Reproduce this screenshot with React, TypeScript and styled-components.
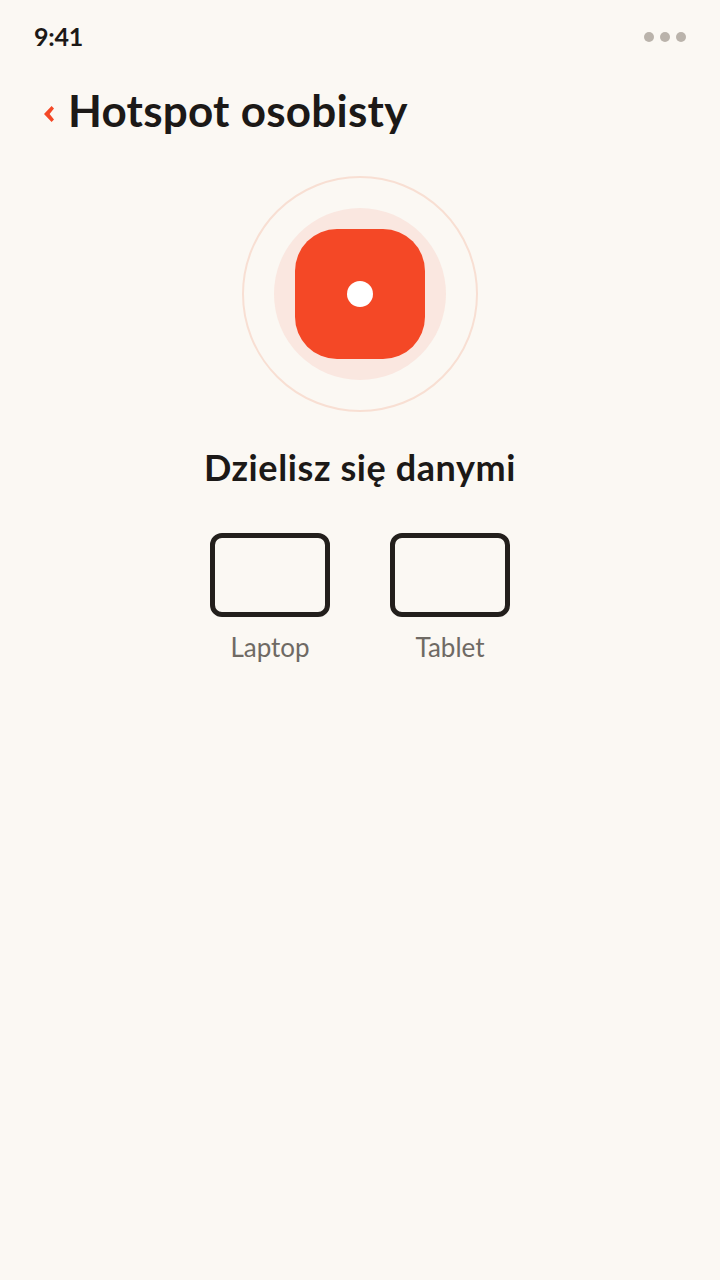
import React from 'react';
import styled, { createGlobalStyle } from 'styled-components';

const GlobalStyle = createGlobalStyle`
  html, body {
    margin: 0;
    padding: 0;
    background: #fbf8f3;
  }
  body {
    font-family: 'Lato', 'Liberation Sans', sans-serif;
  }
`;

const Screen = styled.div`
  width: 720px;
  height: 1280px;
  background: #fbf8f3;
  display: flex;
  flex-direction: column;
  align-items: center;
  overflow: hidden;
`;

const StatusBar = styled.div`
  width: 100%;
  box-sizing: border-box;
  height: 74px;
  padding: 0 34px;
  display: flex;
  align-items: center;
  justify-content: space-between;
`;

const Time = styled.span`
  margin-top: -2px;
  font-size: 25px;
  font-weight: 700;
  letter-spacing: -0.2px;
  color: #1c1917;
`;

const Dots = styled.div`
  display: flex;
  gap: 6px;
`;

const Dot = styled.span`
  width: 10px;
  height: 10px;
  border-radius: 50%;
  background: #bab3ab;
`;

const Header = styled.div`
  width: 100%;
  box-sizing: border-box;
  height: 74px;
  padding-left: 44px;
  display: flex;
  align-items: center;
  gap: 14px;
`;

const BackArrow = styled.svg`
  flex: none;
  margin-top: 6px;
`;

const Title = styled.h1`
  margin: -3px 0 0;
  font-size: 44px;
  font-weight: 700;
  letter-spacing: 0.25px;
  color: #1c1917;
`;

const Rings = styled.div`
  margin-top: 28px;
  width: 236px;
  height: 236px;
  box-sizing: border-box;
  border: 2px solid #f8dfd3;
  border-radius: 50%;
  display: flex;
  align-items: center;
  justify-content: center;
`;

const Halo = styled.div`
  width: 172px;
  height: 172px;
  border-radius: 50%;
  background: #fae7e0;
  display: flex;
  align-items: center;
  justify-content: center;
`;

const Tile = styled.div`
  width: 130px;
  height: 130px;
  border-radius: 42px;
  background: #f44826;
  display: flex;
  align-items: center;
  justify-content: center;
`;

const Pupil = styled.div`
  width: 26px;
  height: 26px;
  border-radius: 50%;
  background: #fff;
`;

const Status = styled.h2`
  margin: 32px 0 0;
  font-size: 36px;
  line-height: 46px;
  font-weight: 700;
  letter-spacing: 0.6px;
  color: #1c1917;
`;

const Devices = styled.div`
  margin-top: 43px;
  display: flex;
  gap: 60px;
`;

const Device = styled.div`
  width: 120px;
  display: flex;
  flex-direction: column;
  align-items: center;
`;

const DeviceFrame = styled.div`
  width: 120px;
  height: 84px;
  box-sizing: border-box;
  border: 5px solid #231f1c;
  border-radius: 12px;
`;

const DeviceName = styled.span`
  margin-top: 15px;
  font-size: 26px;
  line-height: 30px;
  color: #6f6a64;
`;

const BackIcon = () => (
  <BackArrow width="10" height="16" viewBox="0 0 10 16">
    <path d="M7.6 0L10 2.4 5.6 8 10 13.6 7.6 16 0 8Z" fill="#f44826" />
  </BackArrow>
);

const App: React.FC = () => {
  const devices = ['Laptop', 'Tablet'];

  return (
    <Screen>
      <GlobalStyle />
      <StatusBar>
        <Time>9:41</Time>
        <Dots>
          <Dot />
          <Dot />
          <Dot />
        </Dots>
      </StatusBar>
      <Header>
        <BackIcon />
        <Title>Hotspot osobisty</Title>
      </Header>
      <Rings>
        <Halo>
          <Tile>
            <Pupil />
          </Tile>
        </Halo>
      </Rings>
      <Status>Dzielisz się danymi</Status>
      <Devices>
        {devices.map((name) => (
          <Device key={name}>
            <DeviceFrame />
            <DeviceName>{name}</DeviceName>
          </Device>
        ))}
      </Devices>
    </Screen>
  );
};

export default App;
